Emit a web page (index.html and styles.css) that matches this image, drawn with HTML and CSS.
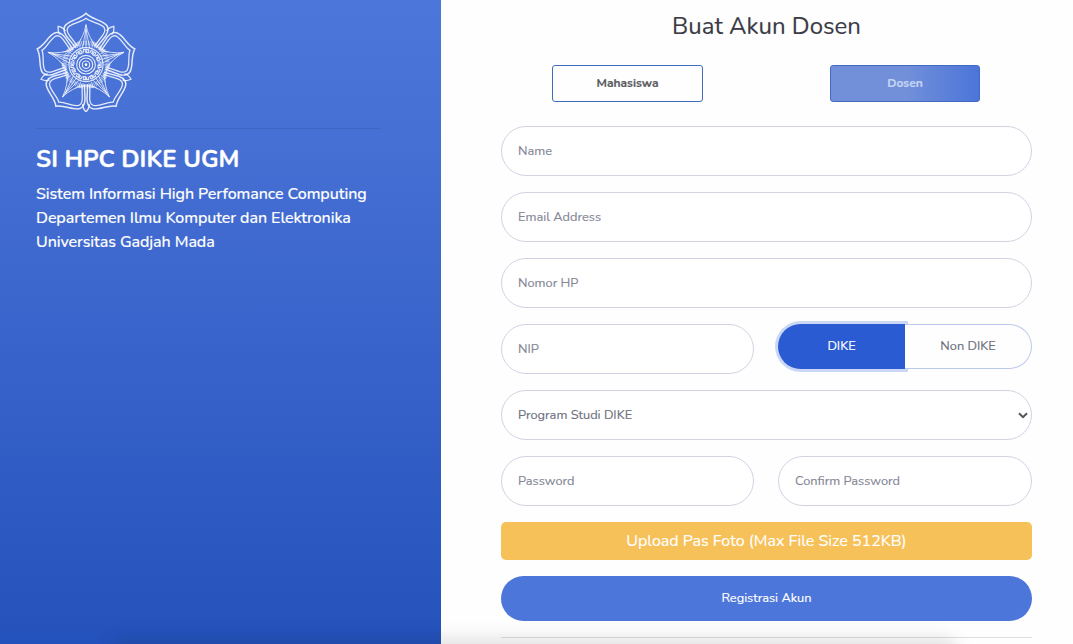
FILE: index.html
```html
<!DOCTYPE html>
<html lang="id">
<head>
<meta charset="utf-8">
<title>SI HPC DIKE UGM</title>
<link rel="stylesheet" href="styles.css">
</head>
<body>
<div class="page">
<aside class="brand">
<svg class="emblem" viewBox="18 20 300 300" fill="none" stroke="#fff" stroke-opacity=".85">
<defs>
<g id="petal">
<path stroke-width="4.4" d="M137 127L109 92C99 77 99 62 113 54C128 43 154 40 168 24C182 40 208 43 223 54C237 62 237 77 227 92L199 127"/>
<path stroke-width="3.8" d="M142 122L117 89C109 77 109 67 120 61C134 51 156 50 168 39C180 50 202 51 216 61C227 67 227 77 219 89L194 122"/>
</g>
<path id="sepal" stroke-width="3.8" d="M159 60C156 51 160 45 168 36C176 45 180 51 177 60"/>
<g id="ray"><path stroke-width="2.4" d="M134 128Q162 96 168 58Q174 96 202 128M157 129L168 72L179 129M168 58V129"/><path stroke-width="1.7" d="M129 128L145 109L151 128M207 128L191 109L185 128M141 128L153 101M195 128L183 101"/></g>
<path id="tooth" stroke-width="3.4" d="M160 142V133H176V142H170V137H166V142"/>
</defs>
<use href="#petal"/><use href="#petal" transform="rotate(72 168 178)"/><use href="#petal" transform="rotate(144 168 178)"/><use href="#petal" transform="rotate(216 168 178)"/><use href="#petal" transform="rotate(288 168 178)"/>
<use href="#sepal" transform="rotate(36 168 178)"/><use href="#sepal" transform="rotate(108 168 178)"/><use href="#sepal" transform="rotate(180 168 178)"/><use href="#sepal" transform="rotate(252 168 178)"/><use href="#sepal" transform="rotate(324 168 178)"/>
<use href="#ray"/><use href="#ray" transform="rotate(72 168 178)"/><use href="#ray" transform="rotate(144 168 178)"/><use href="#ray" transform="rotate(216 168 178)"/><use href="#ray" transform="rotate(288 168 178)"/>
<circle cx="168" cy="178" r="65" stroke-width="14" stroke-dasharray="2.5 2.5" opacity=".7"/>
<circle cx="168" cy="178" r="51" stroke-width="3.4"/>
<use href="#tooth"/><use href="#tooth" transform="rotate(30 168 178)"/><use href="#tooth" transform="rotate(60 168 178)"/><use href="#tooth" transform="rotate(90 168 178)"/><use href="#tooth" transform="rotate(120 168 178)"/><use href="#tooth" transform="rotate(150 168 178)"/><use href="#tooth" transform="rotate(180 168 178)"/><use href="#tooth" transform="rotate(210 168 178)"/><use href="#tooth" transform="rotate(240 168 178)"/><use href="#tooth" transform="rotate(270 168 178)"/><use href="#tooth" transform="rotate(300 168 178)"/><use href="#tooth" transform="rotate(330 168 178)"/>
<g stroke-width="3.4"><circle cx="168" cy="178" r="28"/><circle cx="168" cy="178" r="20"/><circle cx="168" cy="178" r="11"/></g>
<circle cx="168" cy="178" r="4" fill="#fff" stroke="none"/>
</svg>
<hr class="brand-line">
<h1 class="brand-title">SI HPC DIKE UGM</h1>
<p class="brand-text">Sistem Informasi High Perfomance Computing<br>Departemen Ilmu Komputer dan Elektronika<br>Universitas Gadjah Mada</p>
</aside>
<main class="register">
<h2 class="title">Buat Akun Dosen</h2>
<div class="tabs"><a class="tab">Mahasiswa</a><a class="tab tab-active">Dosen</a></div>
<form class="form">
<div class="field">Name</div>
<div class="field">Email Address</div>
<div class="field">Nomor HP</div>
<div class="row">
<div class="field">NIP</div>
<div class="toggle"><span class="option chosen">DIKE</span><span class="option">Non DIKE</span></div>
</div>
<div class="field select">Program Studi DIKE<svg class="chevron" viewBox="0 0 10 7"><path d="M1 1.2L5 5.2L9 1.2" fill="none" stroke="#555" stroke-width="2"/></svg></div>
<div class="row"><div class="field">Password</div><div class="field">Confirm Password</div></div>
<div class="upload">Upload Pas Foto (Max File Size 512KB)</div>
<div class="submit">Registrasi Akun</div>
</form>
<hr class="end-line">
</main>
<div class="bottom-shade"></div>
</div>
</body>
</html>
```
FILE: styles.css
```css
* { box-sizing: border-box; }
body { margin: 0; overflow: hidden; font-family: Nunito, Lato, sans-serif; }
.page { position: relative; display: flex; width: 1073px; height: 644px; overflow: hidden; background: #fefefe; }
.brand { width: 441px; padding: 12px 60px 0 36px; color: #fff; background: linear-gradient(180deg, #4c76da 0%, #4871d5 18%, #2452bc 100%); }
.emblem { display: block; width: 100px; height: 100px; }
.brand-line { width: 345px; height: 1px; margin: 16px 0 0; border: 0; background: #4066c4; }
.brand-title { margin: 14px 0 0; font-size: 24px; line-height: 32px; font-weight: 700; white-space: nowrap; -webkit-text-stroke: .3px; }
.brand-text { margin: 7px 0 0; font-size: 16px; line-height: 24px; font-weight: 500; letter-spacing: -.07px; white-space: nowrap; -webkit-text-stroke: .15px; }
.register { flex: 1; padding: 12px 41px 0 60px; color: #6e707e; }
.title { margin: 0; color: #3a3b45; font-size: 24px; line-height: 29px; font-weight: 400; text-align: center; -webkit-text-stroke: .15px; }
.tabs { display: flex; justify-content: space-between; margin: 24px 52px 24px 51px; }
.tab { width: 151px; height: 37px; border: 1px solid #416bbf; border-radius: 3px; color: #5a5c60; font-size: 12px; line-height: 35px; font-weight: 700; text-align: center; -webkit-text-stroke: .2px; }
.tab-active { width: 150px; color: #c5d5f5; background: linear-gradient(90deg, #7290da 0%, #7290da 50%, #4b75d9 100%); }
.form { display: flex; flex-direction: column; gap: 16px; font-size: 12.8px; -webkit-text-stroke: .15px; }
.field { height: 50px; padding: 0 16px; border: 1px solid #d1d3e2; border-radius: 25px; color: #858796; line-height: 48px; background: #fff; }
.row { display: grid; grid-template-columns: 253px 254px; gap: 24px; }
.toggle { display: flex; height: 45px; border-radius: 23px; }
.option { width: 127px; border: 1px solid #bdc9eb; border-left: 0; border-radius: 0 23px 23px 0; color: #6e707e; line-height: 43px; text-align: center; }
.chosen { border: 0; border-radius: 23px 0 0 23px; color: #fff; background: #2a5bd2; box-shadow: 0 0 0 3px #cad8f6; line-height: 45px; }
.option:last-child { position: relative; background: #fefefe; }
.select { display: flex; align-items: center; justify-content: space-between; padding-right: 3px; color: #6e707e; }
.chevron { width: 10px; height: 7px; }
.upload { height: 38px; border-radius: 5px; color: #fff; background: #f7c15a; font-size: 16px; line-height: 38px; text-align: center; }
.submit { height: 45px; border-radius: 23px; color: #fff; background: #4c76d9; line-height: 44px; text-align: center; }
.end-line { height: 1px; margin: 16px 0 0; border: 0; background: #dfdfdf; }
.bottom-shade { position: absolute; left: 110px; right: 115px; bottom: -25px; height: 32px; border-radius: 16px; background: rgba(0, 0, 0, .1); filter: blur(8px); }
```
